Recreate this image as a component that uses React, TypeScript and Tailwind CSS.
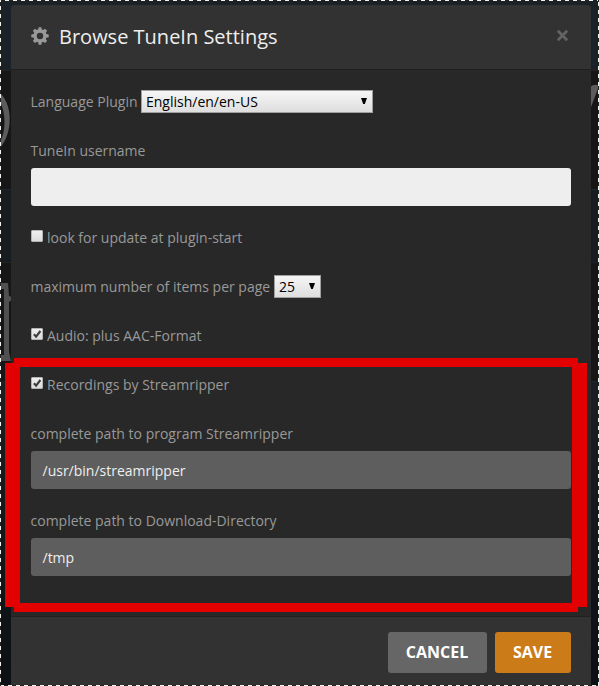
import type { ReactNode } from "react";

function Backdrop() {
  return (
    <div className="absolute inset-0 flex flex-col">
      <div className="h-[70px] bg-[#1a2127]" />
      <div className="h-[119px] border-t border-[#222] bg-[#161616]" />
      <div className="h-[73px] border-t border-[#20252a] bg-[#171c21]" />
      <div className="h-[119px] border-t border-[#222] bg-[#161616]" />
      <div className="flex-1 border-t border-[#20252a] bg-linear-to-b from-[#1a1f23] to-[#0c1015]" />
      <svg className="absolute inset-0" width="599" height="686" fill="none">
        <path d="M0 93C13 105 13 133 0 148V142C6 132 6 112 0 102Z" fill="#5c5c5c" />
        <path d="M590 87Q595 83 599 86L591 107Z" fill="#5c5c5c" />
        <path d="M0 283H8L9 296L12 297V300L9 302V352L11 361H0V355H4V289H0Z" fill="#505050" />
      </svg>
    </div>
  );
}

function Selection() {
  return (
    <div className="pointer-events-none absolute inset-0">
      <div className="absolute inset-x-0 top-0 h-px bg-[repeating-linear-gradient(90deg,#f2f2ea_0_1px,#222_1px_5px,#f2f2ea_5px_8px)]" />
      <div className="absolute inset-x-0 bottom-0 h-px bg-[repeating-linear-gradient(90deg,#f2f2ea_0_4px,#222_4px_8px)]" />
      <div className="absolute inset-y-0 left-0 w-px bg-[repeating-linear-gradient(180deg,#f2f2ea_0_2px,#222_2px_6px,#f2f2ea_6px_8px)]" />
      <div className="absolute inset-y-0 right-0 w-px bg-[repeating-linear-gradient(180deg,#222_0_2px,#f2f2ea_2px_6px,#222_6px_8px)]" />
    </div>
  );
}

function Highlight() {
  return (
    <div className="pointer-events-none absolute inset-0">
      <div className="absolute top-[358px] left-[14px] h-[9px] w-[564px] bg-[#e20000]" />
      <div className="absolute top-[603px] left-[14px] h-[9px] w-[564px] bg-[#e20000]" />
      <div className="absolute top-[363px] left-[5px] h-[244px] w-[15px] bg-[#e20000]" />
      <div className="absolute top-[363px] left-[572px] h-[244px] w-[15px] bg-[#e20000]" />
    </div>
  );
}

function SelectBox({ value, className }: { value: string; className: string }) {
  return (
    <div
      className={`flex h-[23px] items-center justify-between border border-[#a0a0a0] bg-linear-to-b from-[#f6f6f6] to-[#dedede] pr-[5px] pl-[4px] text-black ${className}`}
    >
      <span>{value}</span>
      <svg className="-mt-[2px]" width="6" height="6" viewBox="0 0 6 6">
        <path d="M0 0H6L3.8 6H2.2Z" fill="#000" />
      </svg>
    </div>
  );
}

function CheckRow({ checked, className, children }: { checked?: boolean; className: string; children: ReactNode }) {
  return (
    <label className={`flex h-5 gap-[4.5px] ${className}`}>
      <span className="mt-[2px] size-3 shrink-0 rounded-[1px] border border-[#b4b4b4] bg-linear-to-b from-[#eeeeee] to-[#dcdcdc]">
        {checked && (
          <svg className="block" width="10" height="10" viewBox="0 0 10 10" fill="none">
            <path d="M1.9 5.3L4.1 7.6L8.4 2" stroke="#3c3c3c" strokeWidth="2.1" />
          </svg>
        )}
      </span>
      <span className="-ml-[0.5px]">{children}</span>
    </label>
  );
}

function TextField({ value, className }: { value: string; className: string }) {
  return (
    <div
      className={`mt-[7px] flex h-[38px] items-center rounded-[3px] pt-[2px] pr-3 pl-[11.5px] text-[#eeeeee] ${className}`}
    >
      {value}
    </div>
  );
}

export default function App() {
  return (
    <div className="relative flex h-[686px] w-[599px] overflow-hidden font-['Open_Sans',sans-serif] text-[14px] leading-5 text-[#999999]">
      <Backdrop />
      <main className="relative mt-[5px] ml-[11px] flex w-[580px] flex-col rounded-t-[4px] bg-[#282828]">
        <header className="flex h-[65px] items-center rounded-t-[4px] border-b border-[#202020] bg-[#323232] px-5">
          <svg className="-mt-[2px]" width="18" height="18" viewBox="0 0 19 19">
            <path
              fill="#999"
              fillRule="evenodd"
              d="M8 .2h3l.4 2.4 1.4.6 2-1.4 2.2 2.2-1.4 2 .6 1.4 2.5.4v3.1l-2.5.4-.6 1.4 1.4 2-2.2 2.2-2-1.4-1.4.6-.4 2.6H8l-.4-2.6-1.4-.6-2 1.4L2 14.7l1.4-2-.6-1.4-2.5-.4V7.8l2.5-.4.6-1.4-1.4-2 2.2-2.2 2 1.4 1.4-.6ZM9.5 6.1a3.4 3.4 0 1 0 0 6.8a3.4 3.4 0 0 0 0-6.8Z"
            />
          </svg>
          <h1 className="ml-[10px] text-[20px] text-[#eeeeee]">Browse TuneIn Settings</h1>
          <svg className="mr-[2px] -mt-[4px] ml-auto" width="13" height="13" viewBox="0 0 13 13">
            <path d="M1.8 1.8L11.2 11.2M11.2 1.8L1.8 11.2" stroke="#636363" strokeWidth="2.8" />
          </svg>
        </header>
        <section className="flex h-[546px] flex-col px-5 pt-5">
          <div className="flex h-[23px] items-center">
            <span className="-ml-[0.5px] w-[110.5px] whitespace-nowrap">Language Plugin</span>
            <SelectBox value="English/en/en-US" className="w-[232px]" />
          </div>
          <div className="mt-7 -ml-[0.5px]">TuneIn username</div>
          <TextField value="" className="bg-[#eeeeee]" />
          <CheckRow className="mt-[22px]">look for update at plugin-start</CheckRow>
          <div className="mt-[27px] flex h-[23px] items-center">
            <span className="-ml-[0.5px] w-[243.5px] whitespace-nowrap">maximum number of items per page</span>
            <SelectBox value="25" className="w-[47px]" />
          </div>
          <CheckRow checked className="mt-7">Audio: plus AAC-Format</CheckRow>
          <CheckRow checked className="mt-[29px]">Recordings by Streamripper</CheckRow>
          <div className="mt-[29px] -ml-[0.5px]">complete path to program Streamripper</div>
          <TextField value="/usr/bin/streamripper" className="bg-[#5e5e5e]" />
          <div className="mt-[22px] -ml-[0.5px]">complete path to Download-Directory</div>
          <TextField value="/tmp" className="bg-[#5e5e5e]" />
        </section>
        <footer className="flex flex-1 items-start justify-end gap-2 border-t border-[#202020] bg-[#323232] px-5 pt-[15px] text-[16px] font-bold text-white">
          <button className="h-[41px] w-[99px] rounded-[3px] bg-[#666666] pr-px pb-[2px]">CANCEL</button>
          <button className="h-[41px] w-[76px] rounded-[3px] bg-[#cc7b19] pr-px pb-[2px]">SAVE</button>
        </footer>
      </main>
      <Highlight />
      <Selection />
    </div>
  );
}
